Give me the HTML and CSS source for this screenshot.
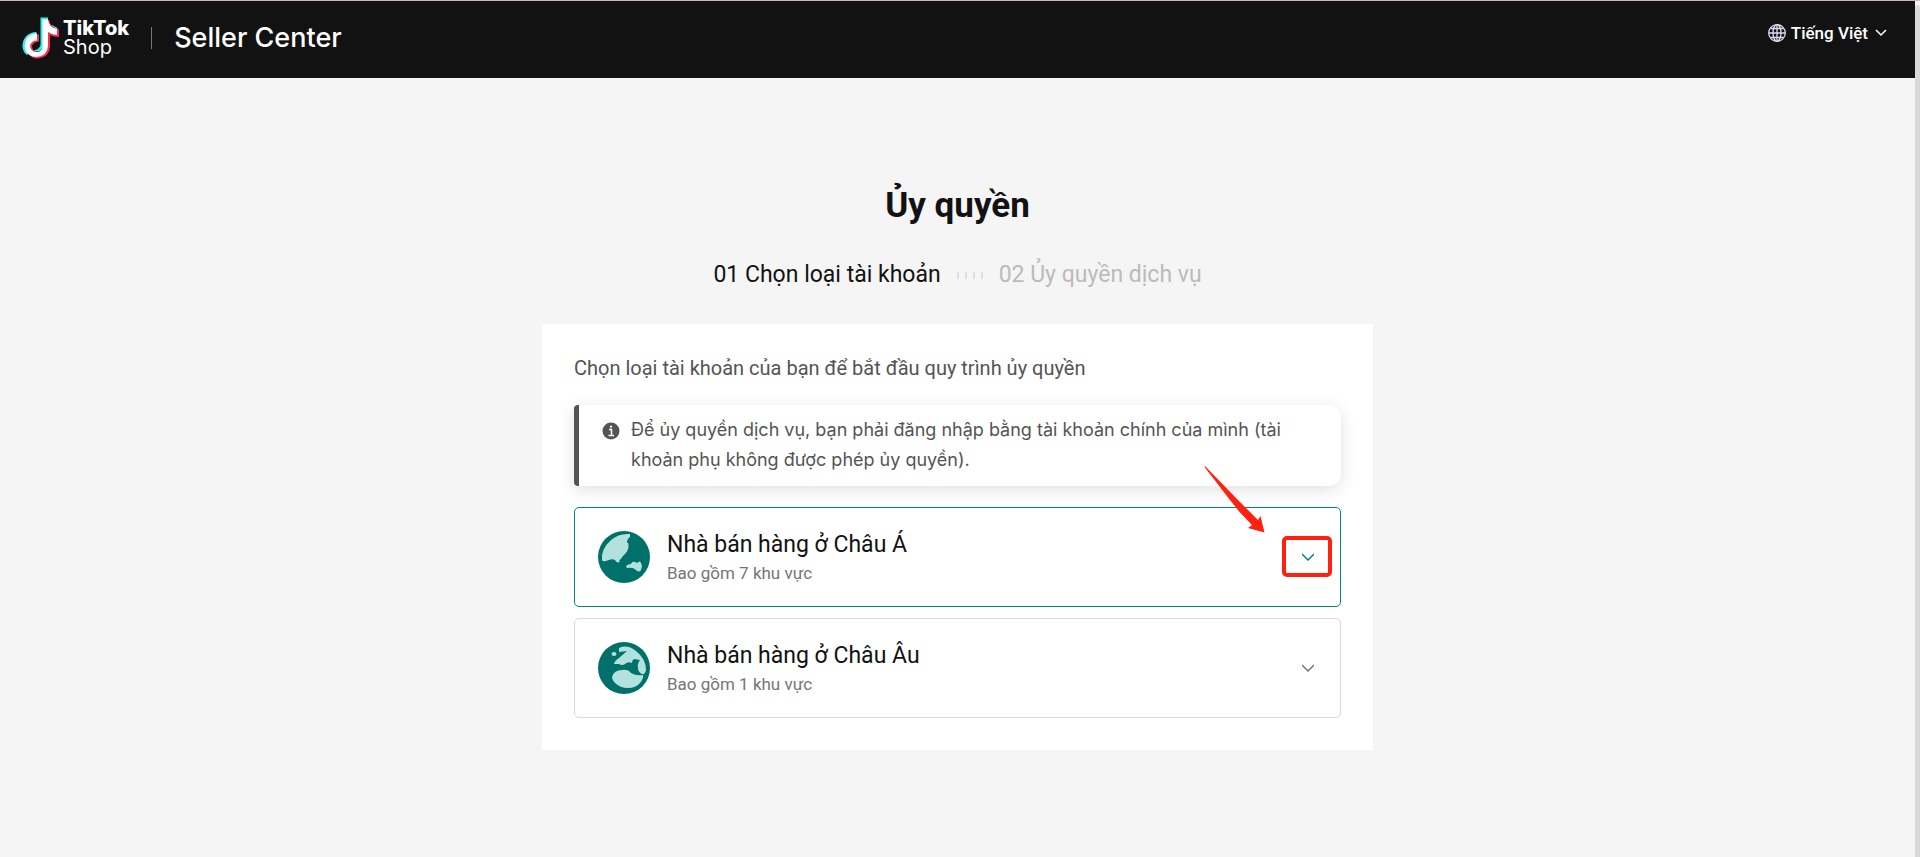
FILE: index.html
```
<!DOCTYPE html>
<html lang="vi">
<head>
    <meta charset="UTF-8">
    <meta name="viewport" content="width=device-width, initial-scale=1.0">
    <title>TikTok Shop | Seller Center</title>
    <link rel="stylesheet" href="styles.css">
</head>
<body>

<div class="page">
    <header class="header">
        <a class="brand" href="#">
            <svg class="brand-note" viewBox="0 0 38 42" aria-hidden="true">
                <path d="M14.500 15 Q8 15 4 19.500 Q0 24 0.500 30 Q1 35 5 38 L8 35 L8 26 L14.500 23 Z M18.500 0.500 H26 V3 H21 V29 Q20 34 15 34.500 L10 33 Q17 34 18.500 28 Z M30 8 L35.500 11 V13 L30 11 Z" fill="#25f4ee"/>
                <path d="M17 24.500 V17.500 Q10 17 6 22 Q4 29 6 36 Q10 42 16 41.500 Q27.500 40 28 30 V18 Q32 20 37 20 V12.500 Q29 11 27 3 L22 3 V29 Q21 35 15 35 Q10 34 10 29 Q11 25 17 24.500 Z" fill="#fe2c55"/>
                <path d="M15 16.500 Q9 16.500 5 21 Q2 26 3 32 Q6 40 14.500 40 Q25.500 39 26 29 V15 Q30 18 35 18 V12 Q27 11 26 2.500 H20.500 V29 Q20 35 14.500 35 Q8.500 34.500 8 29 Q9 23.500 15 23.500 Z" fill="#fff"/>
            </svg>
            <span class="brand-name">
                <span class="brand-tiktok">TikTok</span>
                <span class="brand-shop">Shop</span>
            </span>
        </a>
        <span class="divider"></span>
        <span class="product">Seller Center</span>
        <button class="language" type="button">
            <svg class="globe" viewBox="0 0 18 18" aria-hidden="true">
                <g fill="none" stroke="currentColor" stroke-width="1.300">
                    <circle cx="9" cy="9" r="8.300"/>
                    <ellipse cx="9" cy="9" rx="4" ry="8.300"/>
                    <path d="M9 1v16M1 9h16M2.500 4.500h13M2.500 13.500h13"/>
                </g>
            </svg>
            <span class="language-name">Tiếng Việt</span>
            <svg class="chevron" viewBox="0 0 12 8" aria-hidden="true"><path d="M1 1l5 5 5-5"/></svg>
        </button>
    </header>

    <main class="content">
        <h1 class="title">Ủy quyền</h1>
        <div class="steps">
            <span class="step step-current">01 Chọn loại tài khoản</span>
            <span class="step-dots"><i></i><i></i><i></i><i></i></span>
            <span class="step">02 Ủy quyền dịch vụ</span>
        </div>

        <section class="card">
            <p class="card-intro">Chọn loại tài khoản của bạn để bắt đầu quy trình ủy quyền</p>

            <div class="notice">
                <svg class="notice-icon" viewBox="0 0 18 18" aria-hidden="true">
                    <circle cx="9" cy="9" r="8.500" fill="#545454"/>
                    <path d="M7 7.500h2.500v6M6.500 13.500h5.500" fill="none" stroke="#fff" stroke-width="1.500"/>
                    <circle cx="9" cy="4.700" r="1.100" fill="#fff"/>
                </svg>
                <p class="notice-text">Để ủy quyền dịch vụ, bạn phải đăng nhập bằng tài khoản chính của mình (tài khoản phụ không được phép ủy quyền).</p>
            </div>

            <div class="option-wrap">
                <button class="option option-active" type="button" aria-expanded="false">
                    <svg class="option-globe" viewBox="0 0 54 54" aria-hidden="true">
                        <circle cx="27" cy="27" r="26" fill="#00706b"/>
                        <path d="M33 4Q22 3 14 10Q4 19 5 30Q6 32 9 31Q15 28 18 30Q19 32 21 32.500Q23 33 22.500 30Q24 29 26 26Q32 21 31.500 15Q32 13 30 12.500Q30 9 33 7Z" fill="#b2e2de"/>
                        <path d="M29 36Q31 34 34 34Q35 31 38 32L40 33Q43 30 44 33L45 36L44 40Q42 43 39 40Q36 37 30 38Z" fill="#b2e2de"/>
                    </svg>
                    <span class="option-text">
                        <span class="option-name">Nhà bán hàng ở Châu Á</span>
                        <span class="option-note">Bao gồm 7 khu vực</span>
                    </span>
                    <svg class="chevron" viewBox="0 0 12 8" aria-hidden="true"><path d="M0 1l6 6 6-6"/></svg>
                </button>
                <span class="mark-box"></span>
                <svg class="mark-arrow" viewBox="0 0 62 67" aria-hidden="true">
                    <path d="M1 0L31 31L43 43L54 54L56.500 50L60.500 66.500L44 62L48 59L36 46.500L26 34L0.500 1Z" fill="#ff2010"/>
                </svg>
            </div>

            <button class="option" type="button" aria-expanded="false">
                <svg class="option-globe" viewBox="0 0 54 54" aria-hidden="true">
                    <circle cx="27" cy="27" r="26" fill="#00706b"/>
                    <path d="M22 7Q30 3 39 10Q49 18 49 29Q48 34 45 33Q41 31 41 27Q40 23 43 19L37 18Q35 19 35 22Q31 20 28 23Q25 25 22 23L17 23Q18 19 22 17L30 10L22 11Z" fill="#b2e2de"/>
                    <path d="M15 36Q17 29 25 29Q31 28 34 32Q39 35 46 34Q47 37 43 42Q39 47 31 47Q23 47 18 42Q15 39 15 36Z" fill="#b2e2de"/>
                    <ellipse cx="17" cy="13" rx="2.500" ry="2" fill="#b2e2de"/>
                </svg>
                <span class="option-text">
                    <span class="option-name">Nhà bán hàng ở Châu Âu</span>
                    <span class="option-note">Bao gồm 1 khu vực</span>
                </span>
                <svg class="chevron" viewBox="0 0 12 8" aria-hidden="true"><path d="M0 1l6 6 6-6"/></svg>
            </button>
        </section>
    </main>
</div>

<div class="scrollbar"></div>

</body>
</html>
```

FILE: styles.css
```
* {
    box-sizing: border-box;
}

body {
    margin: 0;
    display: flex;
    min-height: 100vh;
    border-top: 1px solid #c9b7bd;
    background-color: #f5f5f5;
    color: #121212;
    font-family: Roboto, sans-serif;
}

.page {
    flex: 1;
}

.header {
    display: flex;
    align-items: center;
    height: 77px;
    padding: 0 28px 4px 22px;
    background-color: #121212;
    color: #fff;
    font-family: Inter, sans-serif;
}

.brand {
    display: flex;
    align-items: center;
    gap: 3px;
    color: #fff;
    text-decoration: none;
}

.brand-note {
    width: 38px;
    height: 42px;
}

.brand-name {
    display: flex;
    flex-direction: column;
    font-size: 20px;
    line-height: 19px;
}

.brand-tiktok {
    font-weight: 800;
}

.divider {
    width: 1px;
    height: 22px;
    margin: 0 22px;
    background-color: #777;
}

.product {
    font-size: 27px;
    line-height: 32px;
    font-weight: 500;
}

.language {
    display: flex;
    align-items: center;
    margin: 0 0 10px auto;
    padding: 0;
    border: none;
    background: none;
    color: #fff;
    font-family: Roboto, sans-serif;
    font-size: 17px;
    font-weight: 500;
    cursor: pointer;
}

.language-name {
    margin: 0 7px 0 5px;
}

.globe {
    width: 18px;
    height: 18px;
    color: #dcdcf0;
}

.chevron {
    width: 12px;
    height: 8px;
    fill: none;
    stroke: currentColor;
    stroke-width: 1.5;
}

.content {
    display: flex;
    flex-direction: column;
    align-items: center;
    padding: 102px 24px;
}

.title {
    margin: 0;
    font-size: 35px;
    line-height: 52px;
    font-weight: 700;
}

.steps {
    display: flex;
    align-items: center;
    margin: 27px 0 33px;
    font-size: 23px;
    line-height: 32px;
}

.step {
    color: #bbb;
}

.step-current {
    color: #121212;
}

.step-dots {
    display: flex;
    gap: 6px;
    margin: 0 16px;
}

.step-dots i {
    width: 2px;
    height: 7px;
    background-color: #dcdcec;
}

.card {
    width: 100%;
    max-width: 831px;
    padding: 32px;
    background-color: #fff;
}

.card-intro {
    margin: 0 0 25px;
    color: #545454;
    font-size: 20px;
    line-height: 24px;
}

.notice {
    display: flex;
    gap: 11px;
    margin-bottom: 21px;
    padding: 10px 40px 11px 23px;
    border-left: 5px solid #545454;
    border-radius: 4px 12px 12px 4px;
    box-shadow: 0 4px 16px rgba(0, 0, 0, 0.12);
    color: #545454;
}

.notice-icon {
    flex: none;
    width: 18px;
    height: 18px;
    margin-top: 7px;
}

.notice-text {
    margin: 0;
    font-family: Inter, sans-serif;
    font-size: 18px;
    line-height: 30px;
}

.option-wrap {
    position: relative;
    margin-bottom: 11px;
}

.option {
    display: flex;
    align-items: center;
    width: 100%;
    height: 100px;
    padding: 0 26px 0 22px;
    border: 1px solid #d9d9d9;
    border-radius: 5px;
    background-color: #fff;
    color: #757575;
    font-family: inherit;
    text-align: left;
    cursor: pointer;
}

.option-active {
    border-color: #00857f;
}

.option-active .chevron {
    color: #00857f;
}

.option-globe {
    width: 54px;
    height: 54px;
}

.option-text {
    display: flex;
    flex: 1;
    flex-direction: column;
    margin-left: 16px;
}

.option-name {
    color: #121212;
    font-size: 23px;
    line-height: 32px;
}

.option-note {
    font-size: 17px;
    line-height: 24px;
}

.mark-box {
    position: absolute;
    top: 29px;
    right: 9px;
    width: 50px;
    height: 41px;
    border: 4px solid #ff2010;
    border-radius: 5px;
    pointer-events: none;
}

.mark-arrow {
    position: absolute;
    top: -41px;
    right: 75px;
    width: 62px;
    height: 67px;
    pointer-events: none;
}

.scrollbar {
    width: 5px;
    margin-top: 4px;
    border-radius: 3px 3px 0 0;
    background-color: #d9d9d9;
}
```
